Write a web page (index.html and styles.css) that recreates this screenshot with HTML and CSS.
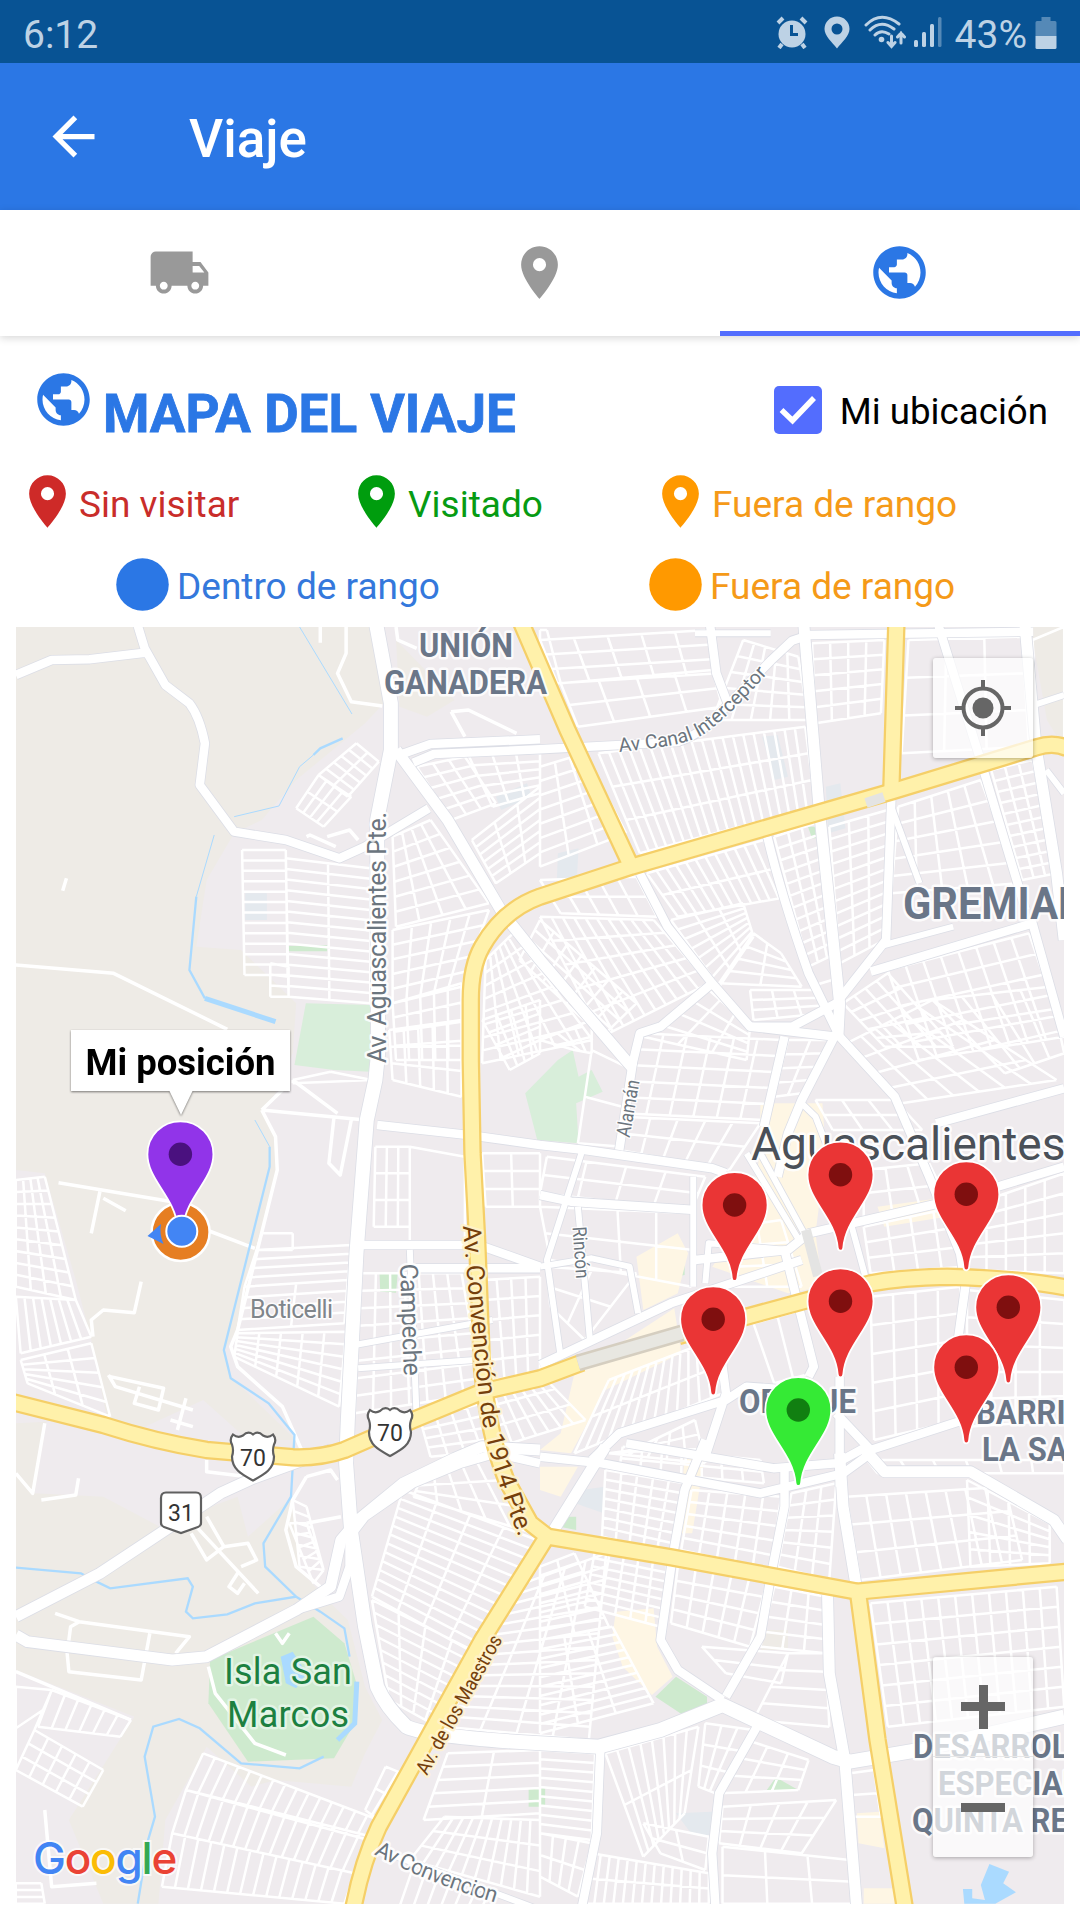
FILE: index.html
```html
<!DOCTYPE html>
<html lang="es">
<head>
<meta charset="utf-8">
<title>Viaje</title>
<link rel="stylesheet" href="styles.css">
</head>
<body>
<svg class="defs" width="0" height="0" aria-hidden="true">
  <defs>
    <symbol id="i-globe" viewBox="0 0 24 24"><path d="M12 2C6.48 2 2 6.48 2 12s4.48 10 10 10 10-4.48 10-10S17.52 2 12 2zm-1 17.93c-3.95-.49-7-3.85-7-7.93 0-.62.08-1.21.21-1.79L9 15v1c0 1.1.9 2 2 2v1.93zm6.9-2.54c-.26-.81-1-1.39-1.9-1.39h-1v-3c0-.55-.45-1-1-1H8v-2h2c.55 0 1-.45 1-1V7h2c1.1 0 2-.9 2-2v-.41c2.93 1.19 5 4.06 5 7.41 0 2.08-.8 3.97-2.1 5.39z"/></symbol>
    <symbol id="i-pin" viewBox="0 0 24 24"><path d="M12 2C8.13 2 5 5.13 5 9c0 5.25 7 13 7 13s7-7.75 7-13c0-3.87-3.13-7-7-7zm0 9.5a2.5 2.5 0 0 1 0-5 2.5 2.5 0 0 1 0 5z"/></symbol>
    <symbol id="i-dot" viewBox="0 0 24 24"><circle cx="12" cy="12" r="10"/></symbol>
    <g id="marker">
      <path d="M0-33C18.500-33 33-18.500 33 0C33 12 27 22 20 33C11 47 4 58 2.800 73Q2.500 76 0 76Q-2.500 76-2.800 73C-4 58-11 47-20 33C-27 22-33 12-33 0C-33-18.500-18.500-33 0-33Z"/>
      <circle class="hole" r="11.700"/>
    </g>
    <path id="shield" d="M-20-21q5 4 10 1q5-5 10-1q5-4 10 1q5 3 10-1q4 5 1 10q-2 6 0 12c0 13-10 18-21 24c-11-6-21-11-21-24q2-6 0-12q-3-5 1-10z"/>
    <path id="p-canal" d="M619 752C655 748 684 746 704 734C724 720 742 702 776 664"/>
    <path id="p-ring" d="M463 1226L467 1275L476 1370L482 1420L492 1462L508 1510L522 1545"/>
    <path id="p-conv" d="M374 1854Q425 1882 500 1904"/>

    <g id="roads-w" transform="matrix(.34439 0 0 .33333 0 620)">
      <g class="w5">
        <path d="M1030 2175L1430 2100M1040 2245L1380 2220M1190 1890L1210 2400"/>
        <path d="M2588 560L2670 790M2568 975L2768 920M1688 1600L1588 1920L1628 2210M1678 1760L1713 2160M1568 1940L1718 1915L1828 1940L1853 2080M2013 1670L2013 2000M2048 1990L2058 1870L2288 1890"/>
        <path d="M2168 1600L2320 1860M2208 1600L2340 1850M2468 1800L2518 1990M3038 450L3090 520M2988 260L3090 225M2328 1450L2368 1490L2398 1570"/>
        <path d="M1100 3690L1568 3870M2238 40L2018 40"/>
      </g>
      <g class="w7">
        <path d="M46 165L150 120L260 118L420 98M395 0L420 85L480 195L550 250Q580 290 595 370L580 495L680 635L830 660L985 715L1060 680L1245 565"/>
        <path d="M1160 405L1250 372L1568 358M1200 428L1260 402L1568 388L1968 366Q2040 340 2080 290L2240 120L2300 62L2350 45L3000 35"/>
        <path d="M2060 0L2080 160L2120 270M1858 760L1938 920L2068 1090L2178 1220L2428 1250M2068 1090L1918 1220L1858 1240L1838 1325L1798 1590M2228 650Q2270 830 2348 1060L2438 1250L2598 1430L2698 1670L2788 1900L2803 2000L2783 2150"/>
        <path d="M2588 540L2573 960L2428 1150L2300 1220L2180 1220M2528 1055L2998 910L3090 1250M2720 0L2853 440L2978 870M2428 1240L2328 1440L2288 1540L2258 1670M2278 1250L2218 1520"/>
        <path d="M1095 1515L1360 1545L1568 1575L1698 1590L2068 1645L2108 1660M1568 1725L1658 1745L2018 1770M1568 2235L1948 2050L2328 1920M2018 1920L2288 1890L2348 1840L2768 1740L3090 1640M2718 1510L3090 1405M2278 1890L2363 2240L2348 2270"/>
        <path d="M1035 1875L1390 1875L1568 1940M1200 1945L1568 1945M2088 2160L2108 2320L2048 2510M1718 2520L1798 2440L2108 2340L2168 2300L2300 2310M2438 2270L2438 2600M2428 2380L2528 2490L2798 2400M1818 2470L2248 2545L2428 2530L2508 2485"/>
        <path d="M1568 2510L1748 2530L2208 2620L2448 2560L2528 2500M2048 2460L1988 2610L1953 2810L1918 3060L1968 3150L2098 3240M2278 2550L2278 2660L2238 2870L2208 3050L2108 3230M2198 3320L2088 3520L2068 3700L2078 3870M1743 3390L1733 3640L1688 3870"/>
        <path d="M860 2970L985 2930L1015 2840L1015 2750L1060 2690L1200 2590L1340 2530L1440 2500L1568 2530"/>
      </g>
      <g class="w9">
        <path d="M1150 390L1300 600L1460 880L1568 1020L1808 1310L1838 1345M2333 0L2378 560L2418 950L2438 1150L2433 1250M2975 0L3008 380L3068 760L3090 960"/>
        <path d="M46 2990L290 2860L480 2730L640 2620L735 2575L960 2490M46 3045L80 3065L500 3120L600 3110L860 2970L960 2900L990 2760L1040 2700L1170 2590L1320 2515L1400 2480L1568 2490"/>
        <path d="M1758 2480L1608 2730M2508 2485L2568 2555L2818 2555L3060 2700L3100 2760M2438 2500L2448 2660L2488 2910M2403 2925L2408 3160L2453 3420L2488 3870"/>
      </g>
      <g class="w12">
        <path d="M1090 0L1135 250L1135 390L1095 600L1098 1300L1090 1380L1065 1500L1035 1900L1010 2400L1005 2530L1020 2740L1060 3020L1095 3200Q1120 3260 1180 3320Q1240 3350 1568 3370L1738 3380L1918 3330L2098 3255L2418 3410L2468 3425L2668 3390L3090 3290"/>
      </g>
    </g>
    <g id="roads-y" transform="matrix(.34439 0 0 .33333 0 620)">
      <path d="M1510 0L1648 330L1833 740M3100 385Q3060 365 3010 382L2588 515L1833 740L1568 830Q1460 870 1400 980Q1367 1040 1367 1140L1367 1320L1372 1600L1385 1850L1400 2250Q1420 2450 1470 2580L1540 2710L1590 2750L1950 2812L2488 2915L3100 2855"/>
      <path d="M2603 0L2588 515M1588 2750L1400 3060L1100 3620Q1050 3730 1025 3870M2493 2930L2548 3360L2630 3880"/>
      <path d="M30 2345L300 2415Q450 2465 600 2490L850 2512Q930 2515 1000 2490L1200 2400L1400 2315L1568 2275L1690 2228M1970 2148L2168 2090L2328 2045L2528 1990Q2620 1972 2750 1970Q2950 1975 3100 2003"/>
    </g>
  </defs>
</svg>

<div class="screen">
  <header class="status">
    <span class="clock">6:12</span>
    <span class="status-icons">
      <svg class="s-alarm" width="32" height="33" viewBox="0 0 32 33"><circle cx="16" cy="18" r="13.500"/><path class="ln" d="M2 7L7 2M30 7L25 2M6 28L3 32M26 28L29 32"/><path class="cut" d="M15.500 9V18.500H22"/></svg>
      <svg class="s-pin" width="26" height="33" viewBox="0 0 26 33"><path fill-rule="evenodd" d="M13 .5C6 .5.500 6 .500 13C.500 20 8 26 13 32.500C18 26 25.500 20 25.500 13C25.500 6 20 .5 13 .5ZM13 7.500a5.500 5.500 0 1 1 0 11a5.500 5.500 0 1 1 0-11Z"/></svg>
      <svg class="s-wifi" width="42" height="34" viewBox="0 0 42 34"><path class="arc" d="M2 10Q17-5 35 9M6 15Q17 4 30 14M11 20Q17 14 25 19"/><circle cx="17.500" cy="24.500" r="2.800"/><path class="arr" d="M27.500 21V31M24 27.500L27.500 31.500L31 27.500M37 28V18M33.500 22L37 18L40.500 22"/></svg>
      <svg class="s-signal" width="28" height="32" viewBox="0 0 28 32"><rect x="0" y="24" width="4" height="7" rx="1.500"/><rect x="8" y="16" width="4" height="15" rx="1.500"/><rect x="16" y="8" width="4" height="23" rx="1.500"/><rect class="dim" x="24" y="1" width="3.500" height="30" rx="1.500"/></svg>
      <span class="pct">43%</span>
      <svg class="s-bat" width="22" height="34" viewBox="0 0 22 34"><path class="dim" d="M6.500 1h9v4H20q1.500 0 1.500 1.500V20H.500V6.500Q.500 5 2 5H6.500z"/><path d="M.500 20h21v11.500q0 1.500-1.500 1.500H2q-1.500 0-1.500-1.500z"/></svg>
    </span>
  </header>

  <div class="appbar">
    <svg class="back" width="63" height="63" viewBox="0 0 24 24"><path d="M20 11H7.830l5.590-5.590L12 4l-8 8 8 8 1.410-1.410L7.830 13H20v-2z"/></svg>
    <h1>Viaje</h1>
  </div>

  <nav class="tabs">
    <div class="tab"><svg width="63" height="63" viewBox="0 0 24 24"><path d="M20 8h-3V4H3c-1.100 0-2 .9-2 2v11h2c0 1.660 1.340 3 3 3s3-1.340 3-3h6c0 1.660 1.340 3 3 3s3-1.340 3-3h2v-5l-3-4zM6 18.500c-.83 0-1.500-.67-1.500-1.500s.67-1.500 1.500-1.500 1.500.67 1.500 1.500-.67 1.500-1.500 1.500zm13.500-9l1.960 2.500H17V9.500h2.500zm-1.500 9c-.83 0-1.500-.67-1.500-1.500s.67-1.500 1.500-1.500 1.500.67 1.500 1.500-.67 1.500-1.500 1.500z"/></svg></div>
    <div class="tab"><svg width="63" height="63"><use href="#i-pin"/></svg></div>
    <div class="tab active"><svg width="63" height="63"><use href="#i-globe"/></svg></div>
  </nav>

  <main>
    <div class="heading">
      <svg class="globe" width="63" height="63"><use href="#i-globe"/></svg>
      <h2>MAPA DEL VIAJE</h2>
      <label class="check"><svg width="48" height="48" viewBox="0 0 48 48"><rect width="48" height="48" rx="5"/><path d="M7.500 24L18.500 34.500L40 12"/></svg>Mi ubicación</label>
    </div>
    <div class="legend pins">
      <div class="item red"><svg width="63" height="63"><use href="#i-pin"/></svg>Sin visitar</div>
      <div class="item green"><svg width="63" height="63"><use href="#i-pin"/></svg>Visitado</div>
      <div class="item orange"><svg width="63" height="63"><use href="#i-pin"/></svg>Fuera de rango</div>
    </div>
    <div class="legend dots">
      <div class="item blue"><svg width="63" height="63"><use href="#i-dot"/></svg>Dentro de rango</div>
      <div class="item orange"><svg width="63" height="63"><use href="#i-dot"/></svg>Fuera de rango</div>
    </div>

    <section class="map">
      <svg class="canvas" width="1048" height="1277" viewBox="16 627 1048 1277">
        <g transform="matrix(.34439 0 0 .33333 0 620)">
          <g class="rural">
            <path d="M46 0H1090L1115 250L1060 310L860 480L760 600L680 640L600 780L570 980L700 990L860 1150L850 1300L800 1420L760 1470L800 1550L805 1650L690 2130L650 2190L670 2270L860 2460L720 2460L590 2340L400 2430L310 2390L265 2160L220 1980L130 1660L46 1650Z"/>
            <path d="M46 2410L135 2405L100 2620L300 2630L500 2740L560 2680L690 2630L720 2750L850 2630L870 2850L960 2950L1010 3000L1060 3200L1110 3300L1060 3400L1020 3500L800 3480L730 3500L600 3380L480 3600L460 3851H300L200 3600L390 3290L46 3150Z"/>
            <path d="M1150 60L1320 240L1240 290L1160 260ZM2988 0H3090V385L3040 300ZM2218 3030L2288 3030V3090L2210 3090Z"/>
          </g>
          <g class="park">
            <path class="deep" d="M910 2990L1000 3070L1035 3190L1030 3310L970 3415L720 3425L605 3250L610 3120Z"/>
            <path d="M888 1150L1075 1155V1355L970 1350L855 1335ZM1663 1290L1680 1370L1718 1350L1750 1415L1673 1450L1680 1570L1560 1560L1525 1420L1620 1320Z"/>
            <path class="deep" d="M838 978L950 976V994H838ZM1883 1935L1988 1918V1965L1888 1985ZM1673 2245L1735 2240L1758 2285L1733 2320L1666 2300ZM1903 3230L1963 3170L2053 3230V3255L1983 3285ZM2253 3472L2318 3510L2223 3515ZM1102 1958L1155 1958L1150 2018L1104 2015ZM2346 620H2371V655H2358ZM1643 2690H1673V2730L1625 2720ZM1535 3505H1583V3560H1535Z"/>
          </g>
          <g class="sand">
            <path d="M1788 2975L1898 2965L1908 3080L1953 3170L1893 3225L1808 3140L1778 3050ZM1668 2260L1958 2065L1978 2200L1758 2310L1658 2500L1568 2490L1628 2440ZM2208 1450H2388L2398 1600L2368 1840L2388 2000L2288 2020L2068 1940L2168 1800L2208 1600ZM2548 1760L2758 1730L2748 1790L2568 1820ZM1848 1910L1968 1840L1998 1900L1968 2020L1868 2070ZM1568 2540H1678L1628 2630L1568 2610ZM1988 2510L2048 2500L2010 2740L1970 2740ZM2488 3580L2553 3575L2568 3685L2493 3670ZM2508 3805H2598V3851H2508Z"/>
          </g>
          <g class="civic">
            <path d="M712 820L775 820V900H712ZM1440 530L1530 490L1545 530L1455 570ZM2213 350L2258 345L2288 470L2248 480ZM2398 500L2440 490L2455 625L2405 640ZM1688 2610L1755 2600L1753 2680L1670 2650ZM1963 3580L2068 3575L2060 3645H2010ZM1620 700L1680 685L1675 775L1617 780Z"/>
          </g>
        </g>

        <g class="streets" id="streets"></g>
        <g class="lanes" transform="matrix(.34439 0 0 .33333 0 620)">
          <path d="M1005 21V100L980 160L1020 245L1110 258M1150 21L1155 60L1210 85M930 21V68M46 1035L330 1060L660 1228M182 812L193 775M1310 275L1360 270L1500 340M1310 275L1350 350M890 650L900 645L975 680M950 650L1015 630L1040 660"/>
          <path d="M170 1688L500 1745M600 1830L740 1885M290 1715L265 1840M300 1735L365 1772M410 1985L390 2078L300 2070L265 2100L270 2150M320 2270L475 2305L460 2370L390 2350L405 2300M315 2265L335 2300L560 2370M540 2335L515 2430M495 2400L560 2420M850 1380L980 1480M970 1490L955 1630L988 1665L1020 1500M760 1470L1060 1500M760 1470L830 1400M760 1470L800 1550L805 1650L690 2130L670 2180L690 2240L820 2360L880 2500"/>
          <path d="M160 2980L230 3005L550 3050L510 3100M230 3005L205 3020L195 3100L200 3155L410 3180L435 3040M555 2740L600 2820L650 2780L600 2690M570 2720L750 2920M650 2780L720 2770L745 2820L700 2840M690 2860L665 2900L690 2920L710 2890M605 3140L625 3220L740 3370L830 3405M800 3040L820 3070L840 3040M46 2560L95 2620L130 2410M120 2640L220 2625L228 2575M46 3155L380 3300M600 2520V2555L720 2570M890 2570L850 2640L830 2730L860 2840L930 2900M890 2710L990 2690M890 2570L960 2550L980 2580M130 3570L150 3800L280 3790"/>
        </g>
        <g class="water" transform="matrix(.34439 0 0 .33333 0 620)">
          <path class="thin" d="M870 21L1022 282M910 405L870 440L810 558L680 590M622 645L570 830M740 1500L783 1580"/>
          <path d="M995 355L930 385L910 405M570 830L550 1050L595 1135M783 1580V1640L650 2190L670 2275L780 2350L855 2445L845 2630L765 2770L770 2840L860 2930L740 2950L660 2983L560 2995L540 2975L560 2900L545 2875L320 2905L280 2885L235 2860L46 2843M860 2930L930 2975L1000 3025L1015 3110M940 3410L870 3445L700 3430L580 3325L520 3297L445 3320L420 3410L450 3590L430 3660L400 3851"/>
          <path class="wide" d="M595 1135L800 1205M1036 3185L1030 3310L980 3360"/>
          <path class="pond" d="M2873 3732L2930 3755L2913 3790L2950 3817L2890 3851H2800L2796 3807H2823V3835L2860 3840L2848 3795ZM815 3110L850 3095L890 3160L860 3205L830 3190Z"/>
        </g>
        <use class="casing-w" href="#roads-w"/>
        <use class="fill-w" href="#roads-w"/>
        <use class="casing-y" href="#roads-y"/>
        <use class="fill-y" href="#roads-y"/>
        <path class="tunnel-edge" d="M578 1363L682 1333"/>
        <path class="tunnel" d="M578 1363L682 1333"/>
        <path class="tunnel small" d="M806 1230L818 1276M866 803L884 797"/>

        <g class="labels district">
          <text x="419" y="656.700" textLength="94" lengthAdjust="spacingAndGlyphs">UNIÓN</text>
          <text x="384" y="694" textLength="163" lengthAdjust="spacingAndGlyphs">GANADERA</text>
          <text x="739" y="1412.700" textLength="117" lengthAdjust="spacingAndGlyphs">OBRAJE</text>
          <text transform="translate(976 1424) scale(.955 1)">BARRIO DE</text>
          <text transform="translate(982 1461) scale(.955 1)">LA SALUD</text>
          <text transform="translate(913 1758) scale(.955 1)">DESARROLLO</text>
          <text transform="translate(938 1795) scale(.955 1)">ESPECIAL</text>
          <text transform="translate(912 1832) scale(.955 1)">QUINTA REAL</text>
          <text class="big" transform="translate(903 918.700) scale(.955 1)">GREMIAL</text>
        </g>
        <g class="labels">
          <text class="city" x="751" y="1160">Aguascalientes</text>
          <text class="park-name" x="224" y="1684" textLength="128">Isla San</text>
          <text class="park-name" x="227" y="1727" textLength="122">Marcos</text>
          <text class="hood" x="250" y="1318" textLength="83">Boticelli</text>
          <text class="street" transform="translate(386 1063) rotate(-90)" textLength="251">Av. Aguascalientes Pte.</text>
          <text class="street" transform="translate(400 1264) rotate(88)" textLength="112">Campeche</text>
          <text class="street small" transform="translate(629.500 1138) rotate(-80)" textLength="58" lengthAdjust="spacingAndGlyphs">Alamán</text>
          <text class="street small" transform="translate(572.500 1227) rotate(86)" textLength="52" lengthAdjust="spacingAndGlyphs">Rincón</text>
          <text class="street small"><textPath href="#p-canal">Av Canal Interceptor</textPath></text>
          <text class="street mid"><textPath href="#p-conv" textLength="131">Av Convencion</textPath></text>
          <text class="avenue"><textPath href="#p-ring" textLength="318">Av. Convención de 1914 Pte.</textPath></text>
          <text class="avenue small" transform="translate(427 1776) rotate(-61)" textLength="156" lengthAdjust="spacingAndGlyphs">Av. de los Maestros</text>
        </g>
        <g class="shields">
          <use href="#shield" x="253" y="1455.500"/><text x="253" y="1465.500">70</text>
          <use href="#shield" x="390" y="1431"/><text x="390" y="1441">70</text>
          <path d="M166 1492.500H196Q201 1492.500 201 1498V1523Q201 1526 198 1527L181 1533L164 1527Q161 1526 161 1523V1498Q161 1492.500 166 1492.500Z"/><text x="181" y="1520.500">31</text>
        </g>
        <g class="markers">
          <circle class="range" cx="180.600" cy="1232" r="29"/>
          <use class="m-purple" href="#marker" x="180.400" y="1154.300"/>
          <path class="heading-arrow" d="M147.500 1236L161 1224Q159 1234 163.500 1244Z"/>
          <circle class="me" cx="181.800" cy="1231.300" r="15.500"/>
          <use href="#marker" x="840.500" y="1174.700"/>
          <use href="#marker" x="966.300" y="1194.300"/>
          <use href="#marker" x="734.600" y="1205"/>
          <use href="#marker" x="840.500" y="1301.300"/>
          <use href="#marker" x="1008.300" y="1307.300"/>
          <use href="#marker" x="713.200" y="1319.300"/>
          <use href="#marker" x="966.300" y="1367.300"/>
          <use class="m-green" href="#marker" x="798.300" y="1410"/>
        </g>
      </svg>
      <div class="bubble">Mi posición</div>
      <div class="ctl locate"><svg width="58" height="58" viewBox="0 0 58 58"><circle class="ring" cx="29" cy="29" r="19.500"/><circle cx="29" cy="29" r="10.500"/><path class="ring" d="M29 1V9M29 49V57M1 29H9M49 29H57"/></svg></div>
      <div class="ctl zoom">
        <div class="key plus"></div>
        <div class="key minus"></div>
      </div>
      <div class="logo"><span class="g1">G</span><span class="g2">o</span><span class="g3">o</span><span class="g1">g</span><span class="g4">l</span><span class="g2">e</span></div>
    </section>
  </main>
</div>
<script src="map.js"></script>
</body>
</html>
```

FILE: styles.css
```css
* { box-sizing: border-box; }
body { margin: 0; background: #fff; font-family: Roboto, "Liberation Sans", sans-serif; }
h1, h2 { margin: 0; }
svg { display: block; flex: none; }
.defs { position: absolute; }
.screen { width: 1080px; height: 1920px; overflow: hidden; display: flex; flex-direction: column; background: #fff; }

.status { height: 63px; background: #085394; color: #bdd2e5; fill: #bdd2e5; display: flex; justify-content: space-between; padding: 0 23px 0 23px; font-size: 39px; line-height: 71px; }
.status-icons { display: flex; align-items: flex-start; }
.status-icons svg { margin-top: 16px; }
.s-alarm .ln { stroke: #bdd2e5; stroke-width: 4; }
.s-alarm .cut { fill: none; stroke: #085394; stroke-width: 3; }
.s-pin { margin-left: 16px; }
.s-wifi { margin-left: 14px; }
.status-icons .s-wifi { margin-top: 15px; }
.s-wifi path { fill: none; stroke: #bdd2e5; stroke-width: 3; stroke-linecap: round; }
.s-signal { margin-left: 8px; }
.dim { fill: #5589b7; }
.pct { margin-left: 13px; margin-right: 8px; }

.appbar { height: 147px; background: #2b77e5; color: #fff; fill: #fff; display: flex; align-items: center; padding-left: 42px; }
.back { margin-bottom: 1px; }
.appbar h1 { margin-left: 84px; font-weight: 500; font-size: 53px; line-height: 62px; padding-top: 5px; }

.tabs { height: 126px; flex: none; display: grid; grid-template-columns: repeat(3, 1fr); fill: #999; background: #fff; box-shadow: 0 2px 8px rgba(0,0,0,.16); }
.tab { display: flex; justify-content: center; padding: 31px 2px 0 0; }
.tab.active { fill: #2b77e5; border-bottom: 5px solid #536dfe; }

main { display: flex; flex-direction: column; padding: 0 16px; }
.heading { height: 128px; display: flex; padding: 32px 16px 0 16px; color: #2b77e5; fill: #2b77e5; }
.heading h2 { font-size: 53px; line-height: 62px; font-weight: 700; margin: 15px 0 0 8px; white-space: nowrap; -webkit-text-stroke: .8px #2b77e5; }
.check { margin-left: auto; display: flex; gap: 18px; color: #000; font-size: 36.700px; line-height: 44px; padding-top: 22px; }
.check svg { margin-top: -4px; fill: #536dfe; }
.check path { fill: none; stroke: #fff; stroke-width: 5.500; }
.legend { display: grid; font-size: 37px; }
.legend.pins { height: 82px; padding-top: 6px; grid-template-columns: 329px 304px auto; }
.legend.dots { height: 81px; padding: 7px 0 0 95px; grid-template-columns: 533px auto; }
.item { display: flex; white-space: nowrap; line-height: 69px; }
.dots .item { gap: 3px; line-height: 67px; }
.red { color: #c92d2a; fill: #ce2a28; }
.green { color: #079b13; fill: #009d0e; }
.orange { color: #f59a18; fill: #ff9900; }
.blue { color: #3478dc; fill: #2b77e5; }

.map { position: relative; width: 1048px; height: 1277px; overflow: hidden; background: #efebee; }
.rural { fill: #eeebe6; }
.park { fill: #d8eeda; }
.park .deep { fill: #ceeace; }
.sand { fill: #fef6e4; }
.civic { fill: #e4e9ee; }
.streets, .lanes { fill: none; stroke: #fff; stroke-width: 2.500; stroke-linejoin: round; }
.lanes path, .water path, #roads-w path, #roads-y path { vector-effect: non-scaling-stroke; }
.lanes { stroke-width: 3.500; }
.water { fill: none; stroke: #aadaff; stroke-width: 2.300; }
.water .thin { stroke-width: 1; }
.water .wide { stroke-width: 5; }
.water .pond { fill: #aadaff; stroke: none; }
#roads-w, #roads-y { fill: none; stroke-linejoin: round; }
.w5 { --w: 6px; }
.w7 { --w: 8.500px; }
.w9 { --w: 11px; }
.w12 { --w: 14px; }
#roads-y { --w: 14px; }
#roads-w path, #roads-y path { stroke-width: calc(var(--w) + var(--edge)); }
.casing-w { --edge: 1.600px; stroke: #dcdee6; }
.fill-w { --edge: 0px; stroke: #fff; }
.casing-y { --edge: 4.500px; stroke: #f5cf68; }
.fill-y { --edge: 0px; stroke: #fff1aa; }
.tunnel { stroke: #e8e7e1; stroke-width: 12; fill: none; }
.tunnel-edge { stroke: #d5cec0; stroke-width: 17; }
.tunnel.small { stroke: #e4e4e3; stroke-width: 10; }

.labels text { paint-order: stroke; stroke: #fff; stroke-opacity: .85; stroke-width: 5px; stroke-linejoin: round; }
.district text { font-weight: 700; font-size: 32.500px; fill: #6a7688; }
.district .big { font-size: 43.500px; }
.labels .city { font-size: 46px; fill: #4a5058; }
.labels .park-name { font-size: 36px; fill: #1c8040; stroke: #e8f7ea; }
.labels .hood { font-size: 25px; fill: #80868b; stroke-width: 3px; }
.labels .street { font-size: 25px; fill: #6b757e; }
.labels .street.small { font-size: 19.500px; stroke-width: 3px; }
.labels .street.mid { font-size: 22px; }
.labels .avenue { font-size: 25px; fill: #753f0c; stroke: #fff3cc; }
.labels .avenue.small { font-size: 20px; }
.shields use, .shields path { fill: #fff; stroke: #606060; stroke-width: 2.200; }
.shields text { font-size: 23px; text-anchor: middle; fill: #333; }

.markers use { fill: #ea3535; stroke: #fff; stroke-width: 1.800; --hole: #7f0f0f; }
.markers .m-purple { fill: #9134e9; --hole: #4a117f; }
.markers .m-green { fill: #35ea35; --hole: #117f11; }
.hole { fill: var(--hole); stroke: none; }
.range { fill: #e67e22; stroke: #fff; stroke-width: 2.500; }
.me { fill: #4285f4; stroke: #fff; stroke-width: 2; }
.heading-arrow { fill: #4285f4; }

.bubble { position: absolute; left: 55px; top: 403px; width: 219px; height: 61px; background: #fff; filter: drop-shadow(0 1px 1px rgba(0,0,0,.5)); font-size: 36.500px; font-weight: 700; line-height: 65px; text-align: center; white-space: nowrap; }
.bubble::after { content: ""; position: absolute; left: 98px; top: 60px; width: 24px; height: 25px; background: #fff; clip-path: polygon(0 0, 100% 0, 50% 100%); }
.ctl { position: absolute; left: 917px; width: 100px; background: rgba(255,255,255,.7); border-radius: 3px; box-shadow: 0 1px 4px rgba(0,0,0,.3); }
.locate { top: 31px; height: 100px; display: grid; place-items: center; fill: #666; }
.locate .ring { fill: none; stroke: #666; stroke-width: 4; }
.zoom { top: 1030px; height: 200px; display: grid; grid-template-rows: 1fr 1fr; }
.key { background: linear-gradient(#666, #666) center / 44px 9px no-repeat; }
.key.plus { background: linear-gradient(#666, #666) center / 44px 9px no-repeat, linear-gradient(#666, #666) center / 9px 44px no-repeat; border-bottom: 1px solid #e8e8e8; }
.logo { position: absolute; left: 17px; top: 1201px; font: 500 44px/60px Inter, sans-serif; letter-spacing: -1.200px; display: flex; -webkit-text-stroke: 4px rgba(255,255,255,.7); paint-order: stroke; }
.g1 { color: #4285f4; }
.g2 { color: #ea4335; }
.g3 { color: #fbbc05; }
.g4 { color: #34a853; }
```

FILE: map.js
```js
// City blocks. Each entry is a quad A,B,C,D (8 numbers) followed by the number
// of divisions along A-B and along A-D; every division line is one street.
const sheets = [
  { x: 0, y: 620, blocks: [
    [703,690,830,690,835,1065,710,1065,1,12],[830,715,1075,745,1075,1150,838,1130,2,13],
    [925,465,1035,370,1100,425,1010,530,5,2],[925,465,1020,530,940,620,860,565,4,2],
    [1210,440,1350,410,1440,550,1310,600,3,5],[1360,405,1568,400,1568,520,1430,560,3,5],[1370,660,1568,500,1568,700,1440,790,3,6],
    [1140,650,1250,600,1420,850,1150,920,4,6],[1140,930,1420,870,1340,1100,1140,1150,5,5],
    [1140,1150,1340,1090,1340,1320,1150,1320,5,4],[1410,1020,1490,940,1720,1260,1400,1330,6,8],[785,1030,838,1040,838,1130,785,1130,1,3] ] },
  { x: 540, y: 620, blocks: [
    [0,60,490,30,520,160,50,190,5,3],[60,190,500,150,530,260,110,320,4,2],
    [170,400,770,320,800,560,290,700,20,3],[310,760,650,660,720,830,400,890,12,2],
    [590,60,750,110,780,300,500,300,5,5],[790,70,1000,60,990,280,800,310,4,5],
    [0,440,130,400,250,640,0,740,3,7],[680,650,800,610,860,1000,780,1040,3,11],[840,620,1010,570,1000,960,870,1030,3,11],
    [1040,560,1280,480,1390,790,1020,820,5,5],[1310,450,1430,420,1500,760,1400,780,3,10],
    [1010,1050,1420,940,1522,1250,1100,1320,8,5],[0,890,330,900,490,1090,180,1250,10,5],[-60,1020,0,900,280,1150,180,1250,4,7],
    [380,900,590,850,620,950,520,1100,3,7],[620,940,700,1000,760,1100,520,1090,2,4],[610,1110,800,1110,830,1180,620,1200,3,3],
    [880,1150,1010,1060,1200,1280,1000,1280,4,5],[1070,60,1400,50,1420,380,1050,400,3,3],
    [300,1250,480,1100,610,1220,600,1320,4,3],[0,780,280,770,340,890,60,880,5,2],[780,1040,860,1000,870,1150,820,1150,1,2],[0,30,20,30,60,190,0,190,1,1],[1430,60,1522,20,1522,380,1450,380,1,1] ] },
  { x: 0, y: 1020, blocks: [
    [46,480,130,470,220,840,46,800,4,9],[46,830,220,840,265,950,60,1000,7,1],[60,1020,265,970,320,1190,80,1090,3,5],
    [760,640,850,640,850,690,745,690,1,1],[745,690,1020,675,1010,780,710,800,1,4],[710,800,1010,780,1000,910,690,930,2,4],
    [690,940,1005,935,985,1160,680,1010,5,6],[1090,380,1190,380,1190,620,1085,620,3,3],
    [1050,760,1340,760,1400,1120,1030,1180,7,8],[1130,30,1340,0,1340,230,1140,180,5,3],
    [1400,400,1568,400,1568,560,1410,560,2,3],[1400,780,1568,770,1568,1060,1430,1080,4,5],
    [850,180,960,155,1080,180,850,190,1,1],[1220,1200,1400,1150,1450,1290,1250,1310,4,4],[1400,0,1568,-60,1568,100,1480,150,4,4],
    [1190,380,1350,410,1350,680,1190,680,1,1],[1400,1100,1568,1060,1700,1200,1450,1280,7,3] ] },
  { x: 540, y: 1020, blocks: [
    [290,40,700,60,650,300,240,280,6,5],[150,90,270,150,240,380,110,370,1,2],[0,60,150,0,150,100,100,90,3,2],
    [240,290,640,310,550,450,230,390,5,2],[720,60,850,60,760,220,680,230,2,4],
    [890,70,1140,-60,1500,180,1050,250,6,4],[1140,-60,1480,-100,1522,100,1350,160,4,3],[20,410,480,470,440,570,0,520,4,2],
    [0,560,450,580,440,800,30,720,4,2],[20,740,280,760,130,960,30,860,2,2],
    [940,620,1210,560,1235,740,960,760,4,3],[1240,560,1522,460,1522,760,1240,750,5,5],[940,450,1130,430,1190,560,940,590,3,2],
    [960,830,1220,800,1220,1200,970,1260,4,5],[620,910,760,870,790,1060,680,1090,2,1],[1240,810,1522,840,1522,1200,1240,1220,4,5],
    [200,1080,500,960,530,1120,100,1300,13,2],[800,240,1030,240,1110,330,850,330,3,2],[560,620,700,600,760,800,560,800,2,3],[270,1290,450,1200,480,1330,200,1300,5,3] ] },
  { x: 0, y: 1440, blocks: [
    [1170,150,1560,300,1380,640,1080,470,4,12],[1080,480,1390,640,1270,860,1130,780,4,8],[1220,120,1420,40,1550,280,1200,170,5,3],
    [1520,430,1760,340,1710,900,1290,860,4,14],[590,940,1100,1140,1070,1200,540,1050,15,1],[540,1050,1080,1190,1030,1300,500,1180,15,1],[500,1180,1030,1300,1000,1391,470,1340,14,1],
    [150,750,380,840,350,890,110,860,6,1],[100,870,300,990,240,1100,46,990,5,3],[46,740,150,750,100,870,46,990,1,2],
    [850,180,890,200,940,390,870,380,1,6],[840,250,890,250,940,390,910,430,1,5],[1120,980,1190,1010,1100,1140,1060,1110,2,2],[1300,940,1568,930,1568,1120,1230,1140,2,5],
    [1290,1130,1568,1140,1568,1370,1190,1260,10,3],[46,1330,120,1330,130,1391,46,1391,1,3],[1200,1280,1420,1360,1400,1400,1160,1400,6,1] ] },
  { x: 540, y: 1440, blocks: [
    [190,90,420,130,380,340,180,290,5,7],[440,150,700,170,670,390,410,330,5,5],[730,160,860,130,840,420,690,380,3,6],[240,20,640,60,650,130,230,90,7,2],
    [890,170,1350,140,1400,360,930,420,8,3],[1240,120,1480,250,1480,370,1250,380,4,5],
    [160,330,370,370,350,560,130,500,5,7],[400,380,660,420,610,620,380,550,5,4],[680,440,830,470,830,640,640,620,3,4],
    [470,620,720,640,700,730,540,700,1,2],[720,640,830,640,840,860,620,840,1,4],
    [960,490,1500,440,1522,800,1010,860,11,6],[0,380,100,340,200,560,0,600,2,8],[0,600,210,560,330,790,0,880,3,10],
    [0,930,160,940,150,1200,0,1180,1,9],[0,1180,150,1210,110,1370,0,1310,4,2],[190,940,460,860,420,1120,300,1250,8,2],
    [600,900,780,960,750,1050,520,1060,3,3],[530,1100,860,1080,760,1240,520,1210,4,3],[150,1240,490,1300,490,1391,130,1391,13,2],
    [300,1150,490,1190,480,1290,350,1240,2,2],[530,1220,900,1260,920,1391,530,1391,3,2],[480,850,620,870,510,1060,460,1040,3,3],[950,60,1522,60,1522,100,980,100,6,1],[900,1000,970,990,990,1130,910,1130,1,2] ] }
];

const fx = 0.34439, fy = 1 / 3;
const mix = (p, q, t) => [p[0] + (q[0] - p[0]) * t, p[1] + (q[1] - p[1]) * t];
let d = "";
for (const s of sheets) {
  for (const b of s.blocks) {
    const [A, B, C, D] = [0, 2, 4, 6].map(i => [s.x + b[i] * fx, s.y + b[i + 1] * fy]);
    const line = (p, q) => { d += `M${p.map(v => v.toFixed(1))}L${q.map(v => v.toFixed(1))}`; };
    for (let i = 0; i <= b[8]; i++) line(mix(A, B, i / b[8]), mix(D, C, i / b[8]));
    for (let j = 0; j <= b[9]; j++) line(mix(A, D, j / b[9]), mix(B, C, j / b[9]));
  }
}
const path = document.createElementNS("http://www.w3.org/2000/svg", "path");
path.setAttribute("d", d);
document.getElementById("streets").appendChild(path);
```
